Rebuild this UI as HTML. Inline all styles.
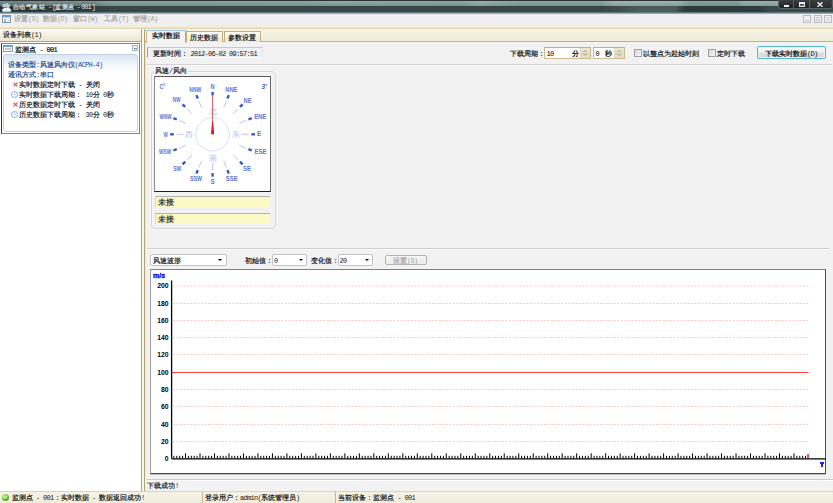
<!DOCTYPE html>
<html><head><meta charset="utf-8">
<style>
*{margin:0;padding:0;box-sizing:border-box}
html,body{width:833px;height:503px;overflow:hidden;background:#f2f2f2;font-family:"Liberation Sans",sans-serif;font-size:7px;color:#000;position:relative}
.a{position:absolute}
.t{position:absolute;white-space:nowrap;line-height:10px;font-size:7px;height:10px}
svg{position:absolute;overflow:visible}
.m{font-family:"Liberation Mono",monospace;font-size:7px;letter-spacing:-0.7px}
i{display:inline-block;width:7px;font-style:normal;text-align:center;-webkit-text-stroke:0.2px currentColor}
</style></head><body>
<div class="a" style="left:0;top:0;width:833px;height:14px;background:linear-gradient(#2c3232 0px,#2c3232 1px,#90aaa4 1px,#7a968e 6px,#3c4a4a 6px,#3a4646 11px,#5a7686 12px,#6a8090 13px,#c8cccc 14px)"></div>
<div class="a" style="left:0;top:1px;width:833px;height:5px;background:linear-gradient(90deg,#5e7676 0px,#6a8282 95px,#7a9690 110px,#7c9892 300px,#82a09a 330px,#7e9a94 460px,#8ea8a0 480px,#7c9892 520px,#7c9892 600px,#94aca4 615px,#90aaa2 680px,#7a9690 690px,#7a9690 735px,#8aa89a 745px,#8aa89a 778px);opacity:0.92"></div>
<div class="a" style="left:0;top:1px;width:833px;height:5px;background:linear-gradient(rgba(255,255,255,0.12),rgba(0,0,0,0.06))"></div>
<div class="a" style="left:0;top:6px;width:833px;height:6px;background:linear-gradient(90deg,#2c3838 0px,#304040 95px,#3a4646 110px,#3a4646 600px,#3e4a48 610px,#4c5a58 640px,#4c5a58 675px,#2e3a38 685px,#303c3a 760px,#3a4848 770px)"></div>
<svg style="left:1px;top:1.5px" width="11" height="11" viewBox="0 0 11 11">
<path d="M2.2 5.2C1 5.2 0.6 3.6 1.8 3.1C1.9 1.6 3.6 1.2 4.5 2C5.3 0.6 7.6 0.8 7.9 2.5C9.3 2.5 9.6 4.6 8.3 5.2Z" fill="#b8c8d8"/>
<path d="M2.4 9.8C0.8 9.8 0.4 7.8 1.9 7.3C2 5.7 4 5.2 5 6.1C5.9 4.6 8.6 4.9 8.9 6.8C10.5 6.8 10.8 9.2 9.3 9.8Z" fill="#eef2f8"/>
</svg>
<div class="t" style="left:12.8px;top:2px;color:#e2e8e6;text-shadow:0 0 2px rgba(20,30,30,0.6)"><i style="width:6.45px;font-size:6.45px">自</i><i style="width:6.45px;font-size:6.45px">动</i><i style="width:6.45px;font-size:6.45px">气</i><i style="width:6.45px;font-size:6.45px">象</i><i style="width:6.45px;font-size:6.45px">站</i></div>
<div class="t" style="left:48px;top:2px;color:#e2e8e6;text-shadow:0 0 2px rgba(20,30,30,0.6)"><span class="m" style="letter-spacing:-1.20px">-</span></div>
<div class="t" style="left:52px;top:2px;color:#e2e8e6;text-shadow:0 0 2px rgba(20,30,30,0.6)"><span class="m" style="letter-spacing:-1.20px">[</span></div>
<div class="t" style="left:55.2px;top:2px;color:#e2e8e6;text-shadow:0 0 2px rgba(20,30,30,0.6)"><i style="width:6.45px;font-size:6.45px">监</i><i style="width:6.45px;font-size:6.45px">测</i><i style="width:6.45px;font-size:6.45px">点</i></div>
<div class="t" style="left:76.8px;top:2px;color:#e2e8e6;text-shadow:0 0 2px rgba(20,30,30,0.6)"><span class="m" style="letter-spacing:-1.20px">-</span></div>
<div class="t" style="left:81.2px;top:2px;color:#e2e8e6;text-shadow:0 0 2px rgba(20,30,30,0.6)"><span class="m" style="letter-spacing:-1.10px">001</span></div>
<div class="t" style="left:91.8px;top:2px;color:#e2e8e6;text-shadow:0 0 2px rgba(20,30,30,0.6)"><span class="m" style="letter-spacing:-1.20px">]</span></div>
<div class="a" style="left:778px;top:-1px;width:16px;height:10px;background:linear-gradient(#3a3e3e,#1e2222);border:1px solid #5a6262;border-radius:0 0 0 3px"></div>
<div class="a" style="left:793px;top:-1px;width:17px;height:10px;background:linear-gradient(#3a3e3e,#1e2222);border:1px solid #5a6262"></div>
<div class="a" style="left:809px;top:-1px;width:24px;height:10px;background:linear-gradient(#3a3e3e,#262a2a);border:1px solid #5a6262;border-radius:0 0 3px 0"></div>
<div class="a" style="left:784px;top:5px;width:5px;height:2px;background:#f4f4ff"></div>
<div class="a" style="left:799px;top:2px;width:6px;height:5px;border:1px solid #e8eaf4;border-top-width:2px;background:#4a5a8a"></div>
<svg style="left:817px;top:2px" width="6" height="5" viewBox="0 0 6 5"><path d="M0.5 0.3L5.5 4.7M5.5 0.3L0.5 4.7" stroke="#f4f4f4" stroke-width="1.4"/></svg>
<div class="a" style="left:0;top:14px;width:833px;height:11px;background:#efefef"></div>
<div class="a" style="left:2px;top:15px;width:9px;height:8px;background:#fff;border:1px solid #8098b0;border-top:2px solid #6a98d0"></div>
<div class="a" style="left:3px;top:17px;width:7px;height:1px;background:#b8d0ec"></div>
<div class="a" style="left:3.5px;top:19px;width:2.5px;height:2.5px;background:#a8b0b8"></div>
<div class="a" style="left:6.5px;top:19.5px;width:3px;height:1.5px;background:#c8ced4"></div>
<div class="t" style="left:14px;top:14px;color:#a4a4a4"><i>设</i><i>置</i><span class="m">(S)</span></div>
<div class="t" style="left:43px;top:14px;color:#a4a4a4"><i>数</i><i>据</i><span class="m">(D)</span></div>
<div class="t" style="left:73px;top:14px;color:#a4a4a4"><i>窗</i><i>口</i><span class="m">(W)</span></div>
<div class="t" style="left:104px;top:14px;color:#a4a4a4"><i>工</i><i>具</i><span class="m">(T)</span></div>
<div class="t" style="left:133px;top:14px;color:#a4a4a4"><i>管</i><i>理</i><span class="m">(A)</span></div>
<div class="a" style="left:803px;top:15px;width:8px;height:8px;border:1px solid #bdbdbd;background:#f0f0f0"></div>
<div class="a" style="left:814px;top:15px;width:8px;height:8px;border:1px solid #bdbdbd;background:#f0f0f0"></div>
<div class="a" style="left:824px;top:15px;width:8px;height:8px;border:1px solid #bdbdbd;background:#f0f0f0"></div>
<div class="a" style="left:805px;top:20px;width:4px;height:1px;background:#c4c4c4"></div>
<div class="a" style="left:816px;top:17px;width:4px;height:4px;border:1px solid #cccccc"></div>
<svg style="left:826px;top:17px" width="4" height="4" viewBox="0 0 4 4"><path d="M0 0L4 4M4 0L0 4" stroke="#c8c8c8" stroke-width="0.8"/></svg>
<div class="a" style="left:0;top:25px;width:833px;height:4px;background:linear-gradient(#f6f3e2,#efe9d2 60%,#d8cca4)"></div>
<div class="a" style="left:0;top:29px;width:142px;height:13px;background:linear-gradient(#fcfbf6,#ece6cf);border-bottom:1px solid #b4a474;border-right:1px solid #b4a474"></div>
<div class="t" style="left:3px;top:30px;color:#202020"><i>设</i><i>备</i><i>列</i><i>表</i><span class="m">(1)</span></div>
<div class="a" style="left:0;top:42px;width:142px;height:449px;background:#fff;border-right:1px solid #b4a474"></div>
<div class="a" style="left:1px;top:43px;width:139px;height:91px;border:1px solid #6a88b4;border-left-color:#1c3c78;background:#fff"></div>
<div class="a" style="left:3px;top:45px;width:10px;height:7px;background:#fff;border:1px solid #8898a8;border-right-width:1.5px"></div>
<div class="a" style="left:4px;top:46px;width:8px;height:1px;background:#70a8e0"></div>
<div class="a" style="left:5px;top:48px;width:6px;height:2px;background:#c0c8d0"></div>
<div class="t" style="left:15px;top:45px;color:#000;-webkit-text-stroke:0.15px #000"><i>监</i><i>测</i><i>点</i><span class="m">&#160;-&#160;001</span></div>
<div class="a" style="left:132px;top:45px;width:6px;height:5.5px;border:1px solid #a0b4cc;background:linear-gradient(#f4f6f8,#dde4ea)"></div>
<div class="a" style="left:133.5px;top:47.5px;width:3px;height:1px;background:#7890b0"></div>
<div class="a" style="left:3px;top:54px;width:135px;height:78px;border:1px solid #c4d2e6;border-radius:3px;background:linear-gradient(#d8e5f5,#f4f8fc 10px,#fff 20px)"></div>
<div class="t" style="left:8px;top:60px;color:#1e4890"><i>设</i><i>备</i><i>类</i><i>型</i><span class="m">:</span><i>风</i><i>速</i><i>风</i><i>向</i><i>仪</i><span class="m">(ACPH-4)</span></div>
<div class="t" style="left:8px;top:70px;color:#1e4890"><i>通</i><i>讯</i><i>方</i><i>式</i><span class="m">:</span><i>串</i><i>口</i></div>
<div class="t" style="left:19px;top:80px;color:#142434"><i>实</i><i>时</i><i>数</i><i>据</i><i>定</i><i>时</i><i>下</i><i>载</i><span class="m">&#160;-&#160;</span><i>关</i><i>闭</i></div>
<svg style="left:12.5px;top:81.8px" width="5" height="5" viewBox="0 0 5 5"><path d="M0.6 0.6L4.4 4.4M4.4 0.6L0.6 4.4" stroke="#e05454" stroke-width="1.2"/></svg>
<div class="t" style="left:19px;top:90px;color:#142434"><i>实</i><i>时</i><i>数</i><i>据</i><i>下</i><i>载</i><i>周</i><i>期</i><i>：</i><span class="m">&#160;10</span><i>分</i><span class="m">&#160;0</span><i>秒</i></div>
<svg style="left:11px;top:90.8px" width="7" height="7" viewBox="0 0 7 7"><circle cx="3.5" cy="3.5" r="3" fill="#fff" stroke="#70a4f0" stroke-width="0.9"/><path d="M3.5 1.6V3.6H5" stroke="#90b8f4" stroke-width="0.7" fill="none"/></svg>
<div class="t" style="left:19px;top:100px;color:#142434"><i>历</i><i>史</i><i>数</i><i>据</i><i>定</i><i>时</i><i>下</i><i>载</i><span class="m">&#160;-&#160;</span><i>关</i><i>闭</i></div>
<svg style="left:12.5px;top:101.6px" width="5" height="5" viewBox="0 0 5 5"><path d="M0.6 0.6L4.4 4.4M4.4 0.6L0.6 4.4" stroke="#e05454" stroke-width="1.2"/></svg>
<div class="t" style="left:19px;top:110px;color:#142434"><i>历</i><i>史</i><i>数</i><i>据</i><i>下</i><i>载</i><i>周</i><i>期</i><i>：</i><span class="m">&#160;30</span><i>分</i><span class="m">&#160;0</span><i>秒</i></div>
<svg style="left:11px;top:110.6px" width="7" height="7" viewBox="0 0 7 7"><circle cx="3.5" cy="3.5" r="3" fill="#fff" stroke="#70a4f0" stroke-width="0.9"/><path d="M3.5 1.6V3.6H5" stroke="#90b8f4" stroke-width="0.7" fill="none"/></svg>
<div class="a" style="left:142px;top:29px;width:3px;height:462px;background:linear-gradient(90deg,#f8f5e6,#fdfcf4)"></div>
<div class="a" style="left:144px;top:29px;width:689px;height:13px;background:linear-gradient(#f7f4e6,#f1ecd8);border-left:1px solid #b4a474;border-bottom:1px solid #c2b282"></div>
<div class="a" style="left:144px;top:42px;width:689px;height:449px;background:#f2f2f2;border-left:1px solid #b4a474"></div>
<div class="a" style="left:145px;top:42px;width:1px;height:437px;background:#e6e8f0"></div>
<div class="a" style="left:146px;top:30px;width:40px;height:13px;background:#f4f4f2;border-top:1px solid #9cc4ec;border-left:1px solid #c8bc98;border-right:1px solid #b8a87a"></div>
<div class="t" style="left:152px;top:31px;color:#000;-webkit-text-stroke:0.1px #000"><i>实</i><i>时</i><i>数</i><i>据</i></div>
<div class="a" style="left:186px;top:31px;width:37px;height:11px;background:linear-gradient(#fdfcf8,#efe9d4);border:1px solid #c0ae7c;border-bottom:none"></div>
<div class="t" style="left:190px;top:33px;color:#181818"><i>历</i><i>史</i><i>数</i><i>据</i></div>
<div class="a" style="left:224px;top:31px;width:37px;height:11px;background:linear-gradient(#fdfcf8,#efe9d4);border:1px solid #c0ae7c;border-bottom:none"></div>
<div class="t" style="left:228px;top:33px;color:#181818"><i>参</i><i>数</i><i>设</i><i>置</i></div>
<div class="a" style="left:147px;top:47px;width:116px;height:11px;background:#f0f0f0;border-left:1px solid #a0a0a0;border-top:1px solid #c8c8c8;border-bottom:1px solid #fbfbfb;border-right:1px solid #e6e6e6"></div>
<div class="t" style="left:152.5px;top:49px;color:#181818"><i>更</i><i>新</i><i>时</i><i>间</i><i>：</i></div>
<div class="t" style="left:190.5px;top:49px;color:#181818"><span class="m">2012-06-02&#160;09:57:51</span></div>
<div class="t" style="left:510px;top:49px;color:#181818"><i>下</i><i>载</i><i>周</i><i>期</i><i>：</i></div>
<div class="a" style="left:544px;top:47px;width:47px;height:11.5px;background:#fff;border:1px solid #c8bc90;border-top-color:#bfb286"></div>
<div class="t" style="left:546.5px;top:49px;"><span class="m">10</span></div>
<div class="t" style="left:572px;top:49px;"><i>分</i></div>
<div class="a" style="left:580px;top:48px;width:10px;height:9.5px;background:linear-gradient(#ece8d6,#e2dcc4);border-left:1px solid #ddd6bc"></div>
<div class="a" style="left:582px;top:49.5px;width:0;height:0;border-left:3px solid transparent;border-right:3px solid transparent;border-bottom:2.5px solid #c4bb98"></div>
<div class="a" style="left:581px;top:52.5px;width:8px;height:0.6px;background:#d6cfb2"></div>
<div class="a" style="left:582px;top:54px;width:0;height:0;border-left:3px solid transparent;border-right:3px solid transparent;border-top:2.5px solid #c4bb98"></div>
<div class="a" style="left:593px;top:47px;width:31.5px;height:11.5px;background:#fff;border:1px solid #c8bc90;border-top-color:#bfb286"></div>
<div class="t" style="left:595.5px;top:49px;"><span class="m">0</span></div>
<div class="t" style="left:604.8px;top:49px;"><i>秒</i></div>
<div class="a" style="left:613.5px;top:48px;width:10px;height:9.5px;background:linear-gradient(#ece8d6,#e2dcc4);border-left:1px solid #ddd6bc"></div>
<div class="a" style="left:615.5px;top:49.5px;width:0;height:0;border-left:3px solid transparent;border-right:3px solid transparent;border-bottom:2.5px solid #c4bb98"></div>
<div class="a" style="left:614.5px;top:52.5px;width:8px;height:0.6px;background:#d6cfb2"></div>
<div class="a" style="left:615.5px;top:54px;width:0;height:0;border-left:3px solid transparent;border-right:3px solid transparent;border-top:2.5px solid #c4bb98"></div>
<div class="a" style="left:634px;top:49px;width:8px;height:8px;background:linear-gradient(135deg,#d8d8d8,#f8f8f8);border:1px solid #a0a0a0"></div>
<div class="t" style="left:643px;top:49px;color:#181818"><i>以</i><i>整</i><i>点</i><i>为</i><i>起</i><i>始</i><i>时</i><i>刻</i></div>
<div class="a" style="left:708px;top:49px;width:8px;height:8px;background:linear-gradient(135deg,#d8d8d8,#f8f8f8);border:1px solid #a0a0a0"></div>
<div class="t" style="left:717px;top:49px;color:#181818"><i>定</i><i>时</i><i>下</i><i>载</i></div>
<div class="a" style="left:757px;top:46px;width:68.5px;height:13px;background:linear-gradient(#fefefe,#f0f0f0 45%,#dedede 55%,#d8d8d8);border:1px solid #52b6d4;border-radius:2px;box-shadow:inset 0 0 0 1px #e8f6fb"></div>
<div class="t" style="left:765px;top:49px;color:#101010"><i>下</i><i>载</i><i>实</i><i>时</i><i>数</i><i>据</i><span class="m">(D)</span></div>
<div class="a" style="left:147px;top:64px;width:685px;height:1px;background:#d2d2d2"></div>
<div class="a" style="left:147px;top:65px;width:685px;height:1px;background:#fafafa"></div>
<div class="a" style="left:150.5px;top:71px;width:125px;height:157.5px;border:1px solid #d6d6d6;border-radius:4px;box-shadow:0.5px 0.5px 0 #fafafa, inset 0.5px 0.5px 0 #fafafa"></div>
<div class="t" style="left:154px;top:67px;background:#f2f2f2;padding:0 1px;color:#202020;height:8px;line-height:8px;top:67px"><i>风</i><i>速</i><span class="m">/</span><i>风</i><i>向</i></div>
<div class="a" style="left:154px;top:76px;width:117px;height:116px;background:#fff;border:1px solid #707070;border-top-color:#5a5a5a;border-left-color:#8a8a8a;border-bottom:1.3px solid #202020;border-right-color:#686868"></div>
<svg style="left:154px;top:76px" width="117" height="116" viewBox="0 0 117 116">
<circle cx="58.6" cy="58.3" r="16.7" fill="none" stroke="#ccd8fa" stroke-width="0.8"/>
<g stroke="#b8c8f2" stroke-width="1"><line x1="69.7" y1="31.5" x2="72.4" y2="25.0"/><line x1="79.1" y1="37.8" x2="84.1" y2="32.8"/><line x1="85.4" y1="47.2" x2="91.9" y2="44.5"/><line x1="87.6" y1="58.3" x2="94.6" y2="58.3"/><line x1="85.4" y1="69.4" x2="91.9" y2="72.1"/><line x1="79.1" y1="78.8" x2="84.1" y2="83.8"/><line x1="69.7" y1="85.1" x2="72.4" y2="91.6"/><line x1="58.6" y1="87.3" x2="58.6" y2="94.3"/><line x1="47.5" y1="85.1" x2="44.8" y2="91.6"/><line x1="38.1" y1="78.8" x2="33.1" y2="83.8"/><line x1="31.8" y1="69.4" x2="25.3" y2="72.1"/><line x1="29.6" y1="58.3" x2="22.6" y2="58.3"/><line x1="31.8" y1="47.2" x2="25.3" y2="44.5"/><line x1="38.1" y1="37.8" x2="33.1" y2="32.8"/><line x1="47.5" y1="31.5" x2="44.8" y2="25.0"/></g>
<g stroke="#2a5ad6" stroke-width="2.4"><line x1="58.6" y1="19.5" x2="58.6" y2="15.9"/><line x1="73.4" y1="22.5" x2="74.8" y2="19.1"/><line x1="86.0" y1="30.9" x2="88.6" y2="28.3"/><line x1="94.4" y1="43.5" x2="97.8" y2="42.1"/><line x1="97.4" y1="58.3" x2="101.0" y2="58.3"/><line x1="94.4" y1="73.1" x2="97.8" y2="74.5"/><line x1="86.0" y1="85.7" x2="88.6" y2="88.3"/><line x1="73.4" y1="94.1" x2="74.8" y2="97.5"/><line x1="58.6" y1="97.1" x2="58.6" y2="100.7"/><line x1="43.8" y1="94.1" x2="42.4" y2="97.5"/><line x1="31.2" y1="85.7" x2="28.6" y2="88.3"/><line x1="22.8" y1="73.1" x2="19.4" y2="74.5"/><line x1="19.8" y1="58.3" x2="16.2" y2="58.3"/><line x1="22.8" y1="43.5" x2="19.4" y2="42.1"/><line x1="31.2" y1="30.9" x2="28.6" y2="28.3"/><line x1="43.8" y1="22.5" x2="42.4" y2="19.1"/></g>
<g fill="#5876d8" font-family="Liberation Sans, sans-serif" font-size="6.6" font-weight="bold" text-anchor="middle"><text x="58.6" y="13.2" textLength="4.2" lengthAdjust="spacingAndGlyphs">N</text><text x="77.3" y="15.6" textLength="12" lengthAdjust="spacingAndGlyphs">NNE</text><text x="93.5" y="26.5" textLength="8" lengthAdjust="spacingAndGlyphs">NE</text><text x="106.2" y="43.2" textLength="12" lengthAdjust="spacingAndGlyphs">ENE</text><text x="105.1" y="60.0" textLength="4.2" lengthAdjust="spacingAndGlyphs">E</text><text x="106.5" y="78.2" textLength="12" lengthAdjust="spacingAndGlyphs">ESE</text><text x="93.0" y="95.1" textLength="8" lengthAdjust="spacingAndGlyphs">SE</text><text x="77.7" y="105.4" textLength="12" lengthAdjust="spacingAndGlyphs">SSE</text><text x="58.6" y="108.4" textLength="4.2" lengthAdjust="spacingAndGlyphs">S</text><text x="42.1" y="104.9" textLength="12" lengthAdjust="spacingAndGlyphs">SSW</text><text x="23.3" y="95.0" textLength="8" lengthAdjust="spacingAndGlyphs">SW</text><text x="11.1" y="78.4" textLength="12" lengthAdjust="spacingAndGlyphs">WSW</text><text x="11.6" y="60.7" textLength="4.2" lengthAdjust="spacingAndGlyphs">W</text><text x="11.6" y="42.7" textLength="12" lengthAdjust="spacingAndGlyphs">WNW</text><text x="22.5" y="26.3" textLength="8" lengthAdjust="spacingAndGlyphs">NW</text><text x="41.3" y="16.0" textLength="12" lengthAdjust="spacingAndGlyphs">NNW</text></g>
<g fill="#b4c4ee" font-size="7.5" text-anchor="middle">
<text x="58.6" y="37.89999999999999">北</text><text x="58.6" y="84.6">南</text><text x="35.2" y="61.099999999999994">西</text><text x="82.0" y="61.099999999999994">东</text>
</g>
<text x="5.5" y="12.5" fill="#5876d8" font-size="6.6" font-weight="bold" textLength="6" lengthAdjust="spacingAndGlyphs">C°</text>
<text x="107.5" y="12.5" fill="#3a5ad0" font-size="6.6" font-weight="bold" font-style="italic">3'</text>
<line x1="58.6" y1="19.5" x2="58.6" y2="58.3" stroke="#dc3848" stroke-width="0.85"/>
<polygon points="57.0,58.3 60.2,58.3 59.1,45.8 58.1,45.8" fill="#e01828"/>
</svg>
<div class="a" style="left:154.5px;top:196.3px;width:115.5px;height:11.2px;background:#fbf9c6;border-top:1px solid #b4b4ac;border-left:1px solid #d4d4c4"></div>
<div class="t" style="left:157.6px;top:198px;color:#202020"><i style="width:8.2px;font-size:8.2px">未</i><i style="width:8.2px;font-size:8.2px">接</i></div>
<div class="a" style="left:154.5px;top:213px;width:115.5px;height:11px;background:#fbf9c6;border-top:1px solid #b4b4ac;border-left:1px solid #d4d4c4"></div>
<div class="t" style="left:157.6px;top:215px;color:#202020"><i style="width:8.2px;font-size:8.2px">未</i><i style="width:8.2px;font-size:8.2px">接</i></div>
<div class="a" style="left:147px;top:248px;width:682px;height:1px;background:#cecece"></div>
<div class="a" style="left:147px;top:249px;width:682px;height:1px;background:#fbfbfb"></div>
<div class="a" style="left:150px;top:254px;width:76.5px;height:11.5px;background:#fff;border:1px solid #c4c4c4;border-radius:2px"></div>
<div class="t" style="left:153px;top:256px;color:#181818"><i>风</i><i>速</i><i>波</i><i>形</i></div>
<div class="a" style="left:218px;top:259px;width:0;height:0;border-left:2.5px solid transparent;border-right:2.5px solid transparent;border-top:2.5px solid #000"></div>
<div class="t" style="left:245px;top:256px;color:#181818"><i>初</i><i>始</i><i>值</i><i>：</i></div>
<div class="a" style="left:272.3px;top:254px;width:34.30000000000001px;height:11.5px;background:#fff;border:1px solid #c4c4c4;border-radius:2px"></div>
<div class="t" style="left:274px;top:256px;color:#181818"><span class="m">0</span></div>
<div class="a" style="left:299px;top:259px;width:0;height:0;border-left:2.5px solid transparent;border-right:2.5px solid transparent;border-top:2.5px solid #000"></div>
<div class="t" style="left:311px;top:256px;color:#181818"><i>变</i><i>化</i><i>值</i><i>：</i></div>
<div class="a" style="left:337.5px;top:254px;width:35.19999999999999px;height:11.5px;background:#fff;border:1px solid #c4c4c4;border-radius:2px"></div>
<div class="t" style="left:339.5px;top:256px;color:#181818"><span class="m">20</span></div>
<div class="a" style="left:365px;top:259px;width:0;height:0;border-left:2.5px solid transparent;border-right:2.5px solid transparent;border-top:2.5px solid #000"></div>
<div class="a" style="left:385px;top:254.8px;width:41.5px;height:10px;background:linear-gradient(#f6f6f6,#ececec);border:1px solid #b4b4b4;border-radius:2px"></div>
<div class="t" style="left:393px;top:256px;color:#a8a8a8"><i>设</i><i>置</i><span class="m">(S)</span></div>
<div class="a" style="left:150px;top:269px;width:676px;height:205px;background:#fff;border:1px solid #a0a0a0;border-top-color:#808080;border-bottom:1px solid #484848;border-right-color:#505050;box-shadow:0 0.6px 0 #9a9a9a"></div>
<svg style="left:150px;top:269px" width="676" height="205" viewBox="0 0 676 205">

<g stroke="#f7c4c4" stroke-width="1" stroke-dasharray="1.7 1.8"><line x1="23.1" y1="172.5" x2="658.6" y2="172.5"/><line x1="23.1" y1="155.5" x2="658.6" y2="155.5"/><line x1="23.1" y1="137.5" x2="658.6" y2="137.5"/><line x1="23.1" y1="120.5" x2="658.6" y2="120.5"/><line x1="23.1" y1="85.5" x2="658.6" y2="85.5"/><line x1="23.1" y1="68.5" x2="658.6" y2="68.5"/><line x1="23.1" y1="51.5" x2="658.6" y2="51.5"/><line x1="23.1" y1="34.5" x2="658.6" y2="34.5"/><line x1="23.1" y1="17.0" x2="658.6" y2="17.0"/></g>
<line x1="21.6" y1="103.5" x2="658.6" y2="103.5" stroke="#f84444" stroke-width="1"/>
<path d="M35.50 184.3v5.3M49.99 184.3v5.3M64.48 184.3v5.3M78.96 184.3v5.3M93.45 184.3v5.3M107.94 184.3v5.3M122.43 184.3v5.3M136.91 184.3v5.3M151.40 184.3v5.3M165.89 184.3v5.3M180.38 184.3v5.3M194.87 184.3v5.3M209.35 184.3v5.3M223.84 184.3v5.3M238.33 184.3v5.3M252.82 184.3v5.3M267.30 184.3v5.3M281.79 184.3v5.3M296.28 184.3v5.3M310.77 184.3v5.3M325.26 184.3v5.3M339.74 184.3v5.3M354.23 184.3v5.3M368.72 184.3v5.3M383.21 184.3v5.3M397.70 184.3v5.3M412.18 184.3v5.3M426.67 184.3v5.3M441.16 184.3v5.3M455.65 184.3v5.3M470.13 184.3v5.3M484.62 184.3v5.3M499.11 184.3v5.3M513.60 184.3v5.3M528.09 184.3v5.3M542.57 184.3v5.3M557.06 184.3v5.3M571.55 184.3v5.3M586.04 184.3v5.3M600.52 184.3v5.3M615.01 184.3v5.3M629.50 184.3v5.3M643.99 184.3v5.3" stroke="#000" stroke-width="1"/><path d="M23.91 186.8v2.8M26.81 186.8v2.8M29.70 186.8v2.8M32.60 186.8v2.8M38.40 186.8v2.8M41.30 186.8v2.8M44.19 186.8v2.8M47.09 186.8v2.8M52.89 186.8v2.8M55.78 186.8v2.8M58.68 186.8v2.8M61.58 186.8v2.8M67.37 186.8v2.8M70.27 186.8v2.8M73.17 186.8v2.8M76.07 186.8v2.8M81.86 186.8v2.8M84.76 186.8v2.8M87.66 186.8v2.8M90.55 186.8v2.8M96.35 186.8v2.8M99.25 186.8v2.8M102.14 186.8v2.8M105.04 186.8v2.8M110.84 186.8v2.8M113.73 186.8v2.8M116.63 186.8v2.8M119.53 186.8v2.8M125.32 186.8v2.8M128.22 186.8v2.8M131.12 186.8v2.8M134.02 186.8v2.8M139.81 186.8v2.8M142.71 186.8v2.8M145.61 186.8v2.8M148.50 186.8v2.8M154.30 186.8v2.8M157.20 186.8v2.8M160.10 186.8v2.8M162.99 186.8v2.8M168.79 186.8v2.8M171.69 186.8v2.8M174.58 186.8v2.8M177.48 186.8v2.8M183.28 186.8v2.8M186.17 186.8v2.8M189.07 186.8v2.8M191.97 186.8v2.8M197.76 186.8v2.8M200.66 186.8v2.8M203.56 186.8v2.8M206.46 186.8v2.8M212.25 186.8v2.8M215.15 186.8v2.8M218.05 186.8v2.8M220.94 186.8v2.8M226.74 186.8v2.8M229.64 186.8v2.8M232.53 186.8v2.8M235.43 186.8v2.8M241.23 186.8v2.8M244.12 186.8v2.8M247.02 186.8v2.8M249.92 186.8v2.8M255.71 186.8v2.8M258.61 186.8v2.8M261.51 186.8v2.8M264.41 186.8v2.8M270.20 186.8v2.8M273.10 186.8v2.8M276.00 186.8v2.8M278.90 186.8v2.8M284.69 186.8v2.8M287.59 186.8v2.8M290.49 186.8v2.8M293.38 186.8v2.8M299.18 186.8v2.8M302.08 186.8v2.8M304.97 186.8v2.8M307.87 186.8v2.8M313.67 186.8v2.8M316.56 186.8v2.8M319.46 186.8v2.8M322.36 186.8v2.8M328.15 186.8v2.8M331.05 186.8v2.8M333.95 186.8v2.8M336.85 186.8v2.8M342.64 186.8v2.8M345.54 186.8v2.8M348.44 186.8v2.8M351.33 186.8v2.8M357.13 186.8v2.8M360.03 186.8v2.8M362.92 186.8v2.8M365.82 186.8v2.8M371.62 186.8v2.8M374.51 186.8v2.8M377.41 186.8v2.8M380.31 186.8v2.8M386.10 186.8v2.8M389.00 186.8v2.8M391.90 186.8v2.8M394.80 186.8v2.8M400.59 186.8v2.8M403.49 186.8v2.8M406.39 186.8v2.8M409.29 186.8v2.8M415.08 186.8v2.8M417.98 186.8v2.8M420.88 186.8v2.8M423.77 186.8v2.8M429.57 186.8v2.8M432.47 186.8v2.8M435.36 186.8v2.8M438.26 186.8v2.8M444.06 186.8v2.8M446.95 186.8v2.8M449.85 186.8v2.8M452.75 186.8v2.8M458.54 186.8v2.8M461.44 186.8v2.8M464.34 186.8v2.8M467.24 186.8v2.8M473.03 186.8v2.8M475.93 186.8v2.8M478.83 186.8v2.8M481.72 186.8v2.8M487.52 186.8v2.8M490.42 186.8v2.8M493.31 186.8v2.8M496.21 186.8v2.8M502.01 186.8v2.8M504.90 186.8v2.8M507.80 186.8v2.8M510.70 186.8v2.8M516.50 186.8v2.8M519.39 186.8v2.8M522.29 186.8v2.8M525.19 186.8v2.8M530.98 186.8v2.8M533.88 186.8v2.8M536.78 186.8v2.8M539.68 186.8v2.8M545.47 186.8v2.8M548.37 186.8v2.8M551.27 186.8v2.8M554.16 186.8v2.8M559.96 186.8v2.8M562.86 186.8v2.8M565.75 186.8v2.8M568.65 186.8v2.8M574.45 186.8v2.8M577.34 186.8v2.8M580.24 186.8v2.8M583.14 186.8v2.8M588.93 186.8v2.8M591.83 186.8v2.8M594.73 186.8v2.8M597.63 186.8v2.8M603.42 186.8v2.8M606.32 186.8v2.8M609.22 186.8v2.8M612.11 186.8v2.8M617.91 186.8v2.8M620.81 186.8v2.8M623.70 186.8v2.8M626.60 186.8v2.8M632.40 186.8v2.8M635.30 186.8v2.8M638.19 186.8v2.8M641.09 186.8v2.8M646.89 186.8v2.8M649.78 186.8v2.8M652.68 186.8v2.8M655.58 186.8v2.8" stroke="#000" stroke-width="1"/>
<rect x="657.2" y="185" width="1.6" height="4.5" fill="#f02828"/>
<line x1="21.6" y1="11.5" x2="21.6" y2="189.6" stroke="#000" stroke-width="1.3"/>
<line x1="21.6" y1="189.79999999999998" x2="675.5" y2="189.79999999999998" stroke="#000" stroke-width="1.3"/>
<g font-family="Liberation Sans, sans-serif" font-size="6.8" font-weight="bold" text-anchor="end" fill="#000"><text x="18.6" y="192.1">0</text><text x="18.6" y="174.8">20</text><text x="18.6" y="157.5">40</text><text x="18.6" y="140.3">60</text><text x="18.6" y="123.0">80</text><text x="18.6" y="105.7">100</text><text x="18.6" y="88.4">120</text><text x="18.6" y="71.1">140</text><text x="18.6" y="53.9">160</text><text x="18.6" y="36.6">180</text><text x="18.6" y="19.3">200</text></g>
<text x="3" y="8.9" fill="#0a0af0" stroke="#0a0af0" stroke-width="0.35" font-size="7" font-weight="bold" font-family="Liberation Sans, sans-serif" textLength="12" lengthAdjust="spacingAndGlyphs">m/s</text>
<path d="M670 193h4v2h-1v3h-2v-3h-1z" fill="#2020f8"/>
</svg>
<div class="a" style="left:147px;top:479px;width:686px;height:1px;background:#cacaca"></div>
<div class="a" style="left:147px;top:480px;width:686px;height:1px;background:#fbfbfb"></div>
<div class="t" style="left:147px;top:481px;color:#202020"><i>下</i><i>载</i><i>成</i><i>功</i><span class="m">!</span></div>
<div class="a" style="left:0;top:491px;width:833px;height:12px;background:linear-gradient(#f6f3e6,#f0ecda);border-top:1px solid #dcd4b4"></div>
<div class="a" style="left:1.8px;top:493.6px;width:7.4px;height:7.4px;border-radius:50%;background:radial-gradient(circle at 35% 30%,#c8f080,#58b820 60%,#3a9010)"></div>
<svg style="left:3px;top:495px" width="5" height="4" viewBox="0 0 5 4"><path d="M0.5 2L2 3.3L4.5 0.7" stroke="#fff" stroke-width="0.9" fill="none"/></svg>
<div class="t" style="left:11.5px;top:493px;color:#181818"><i>监</i><i>测</i><i>点</i><span class="m">&#160;-&#160;001</span><i>：</i><i>实</i><i>时</i><i>数</i><i>据</i><span class="m">&#160;-&#160;</span><i>数</i><i>据</i><i>返</i><i>回</i><i>成</i><i>功</i><span class="m">!</span></div>
<div class="a" style="left:202px;top:492px;width:1px;height:11px;background:#c4b894"></div>
<div class="t" style="left:205px;top:493px;color:#181818"><i>登</i><i>录</i><i>用</i><i>户</i><i>：</i><span class="m">admin(</span><i>系</i><i>统</i><i>管</i><i>理</i><i>员</i><span class="m">)</span></div>
<div class="a" style="left:335px;top:492px;width:1px;height:11px;background:#c4b894"></div>
<div class="t" style="left:338px;top:493px;color:#181818"><i>当</i><i>前</i><i>设</i><i>备</i><i>：</i><i>监</i><i>测</i><i>点</i><span class="m">&#160;-&#160;001</span></div>
</body></html>
